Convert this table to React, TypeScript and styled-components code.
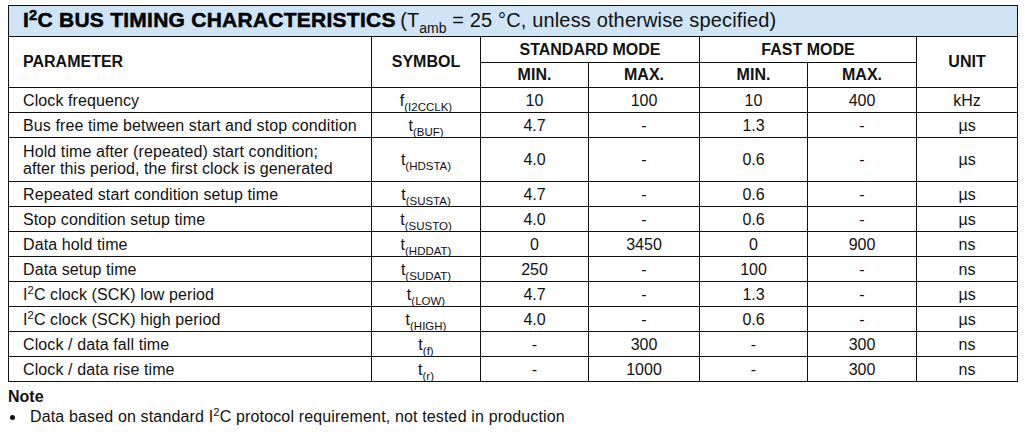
import React from "react";
import styled, { createGlobalStyle } from "styled-components";

const Global = createGlobalStyle`
  html, body { margin: 0; padding: 0; background: #ffffff; }
  body { font-family: "Liberation Sans", Arial, sans-serif; color: #111; }
`;

const Page = styled.div`
  padding: 5px 8px 0 8px;
  width: 1009px;
`;

const Table = styled.table`
  border-collapse: collapse;
  table-layout: fixed;
  width: 1009px;
  font-size: 16px;
  border: 1px solid #111;
`;

const TitleCell = styled.th`
  background: #cfe4f5;
  height: 30px;
  padding: 0 0 0 14px;
  text-align: left;
  border: 1px solid #111;
  white-space: nowrap;
  line-height: 22px;
`;

const TitleMain = styled.span`
  font-size: 21px;
  font-weight: 700;
  -webkit-text-stroke: 0.5px #000;
  color: #000;
  letter-spacing: 0.25px;
`;

const TitleSub = styled.span`
  font-size: 20px;
  font-weight: 400;
  color: #111;
  letter-spacing: 0.15px;
`;

const Sup = styled.sup`
  font-size: 0.7em;
  vertical-align: 0.5em;
  line-height: 0;
`;

const Sub = styled.sub<{ $size?: number }>`
  font-size: ${(p) => p.$size ?? 11.5}px;
  vertical-align: -0.4em;
  line-height: 0;
  letter-spacing: 0;
`;

const HeadCell = styled.th<{ $left?: boolean; $h?: number }>`
  border: 1px solid #111;
  font-weight: 700;
  font-size: 16px;
  text-align: ${(p) => (p.$left ? "left" : "center")};
  padding: ${(p) => (p.$left ? "0 0 0 14px" : "0")};
  height: ${(p) => p.$h ?? 24}px;
  line-height: 18px;
  color: #111;
`;

const Cell = styled.td<{ $left?: boolean }>`
  border: 1px solid #111;
  text-align: ${(p) => (p.$left ? "left" : "center")};
  padding: ${(p) => (p.$left ? "0 0 0 14px" : "0")};
  height: 24px;
  line-height: 17px;
  letter-spacing: ${(p) => (p.$left ? "0.1px" : "0")};
  color: #111;
  white-space: nowrap;
`;

const Row = styled.tr<{ $tall?: boolean }>`
  height: ${(p) => (p.$tall ? 44 : 25)}px;
`;

const NoteBlock = styled.div`
  margin-top: 5px;
  font-size: 16px;
  color: #111;
`;

const NoteTitle = styled.div`
  font-weight: 700;
  line-height: 20px;
`;

const Bullet = styled.div`
  display: flex;
  align-items: center;
  line-height: 20px;
  letter-spacing: 0.15px;
`;

const Dot = styled.span`
  width: 5px;
  height: 5px;
  border-radius: 50%;
  background: #111;
  margin: 0 15px 0 2px;
`;

type R = {
  p: React.ReactNode;
  s: string;
  sub: string;
  v: [string, string, string, string];
  u: string;
  tall?: boolean;
};

const I2C = (
  <>
    I<Sup>2</Sup>C
  </>
);

const rows: R[] = [
  { p: "Clock frequency", s: "f", sub: "(I2CCLK)", v: ["10", "100", "10", "400"], u: "kHz" },
  { p: "Bus free time between start and stop condition", s: "t", sub: "(BUF)", v: ["4.7", "-", "1.3", "-"], u: "µs" },
  {
    p: (
      <>
        Hold time after (repeated) start condition;
        <br />
        after this period, the first clock is generated
      </>
    ),
    s: "t",
    sub: "(HDSTA)",
    v: ["4.0", "-", "0.6", "-"],
    u: "µs",
    tall: true,
  },
  { p: "Repeated start condition setup time", s: "t", sub: "(SUSTA)", v: ["4.7", "-", "0.6", "-"], u: "µs" },
  { p: "Stop condition setup time", s: "t", sub: "(SUSTO)", v: ["4.0", "-", "0.6", "-"], u: "µs" },
  { p: "Data hold time", s: "t", sub: "(HDDAT)", v: ["0", "3450", "0", "900"], u: "ns" },
  { p: "Data setup time", s: "t", sub: "(SUDAT)", v: ["250", "-", "100", "-"], u: "ns" },
  { p: <>{I2C} clock (SCK) low period</>, s: "t", sub: "(LOW)", v: ["4.7", "-", "1.3", "-"], u: "µs" },
  { p: <>{I2C} clock (SCK) high period</>, s: "t", sub: "(HIGH)", v: ["4.0", "-", "0.6", "-"], u: "µs" },
  { p: "Clock / data fall time", s: "t", sub: "(f)", v: ["-", "300", "-", "300"], u: "ns" },
  { p: "Clock / data rise time", s: "t", sub: "(r)", v: ["-", "1000", "-", "300"], u: "ns" },
];

const widths = [363, 109, 108, 111, 108, 109, 101];

export default function App() {
  return (
    <>
      <Global />
      <Page>
        <Table>
          <colgroup>
            {widths.map((w, i) => (
              <col key={i} style={{ width: w }} />
            ))}
          </colgroup>
          <thead>
            <tr>
              <TitleCell colSpan={7}>
                <TitleMain>
                  I<Sup>2</Sup>C BUS TIMING CHARACTERISTICS
                </TitleMain>{" "}
                <TitleSub>
                  (T<Sub $size={14}>amb</Sub> = 25 °C, unless otherwise specified)
                </TitleSub>
              </TitleCell>
            </tr>
            <tr>
              <HeadCell $left rowSpan={2}>PARAMETER</HeadCell>
              <HeadCell rowSpan={2}>SYMBOL</HeadCell>
              <HeadCell colSpan={2} $h={25}>STANDARD MODE</HeadCell>
              <HeadCell colSpan={2} $h={25}>FAST MODE</HeadCell>
              <HeadCell rowSpan={2}>UNIT</HeadCell>
            </tr>
            <tr>
              <HeadCell>MIN.</HeadCell>
              <HeadCell>MAX.</HeadCell>
              <HeadCell>MIN.</HeadCell>
              <HeadCell>MAX.</HeadCell>
            </tr>
          </thead>
          <tbody>
            {rows.map((r, i) => (
              <Row key={i} $tall={r.tall}>
                <Cell $left>{r.p}</Cell>
                <Cell>
                  {r.s}
                  <Sub>{r.sub}</Sub>
                </Cell>
                {r.v.map((v, j) => (
                  <Cell key={j}>{v}</Cell>
                ))}
                <Cell>{r.u}</Cell>
              </Row>
            ))}
          </tbody>
        </Table>
        <NoteBlock>
          <NoteTitle>Note</NoteTitle>
          <Bullet>
            <Dot />
            <span>Data based on standard {I2C} protocol requirement, not tested in production</span>
          </Bullet>
        </NoteBlock>
      </Page>
    </>
  );
}
